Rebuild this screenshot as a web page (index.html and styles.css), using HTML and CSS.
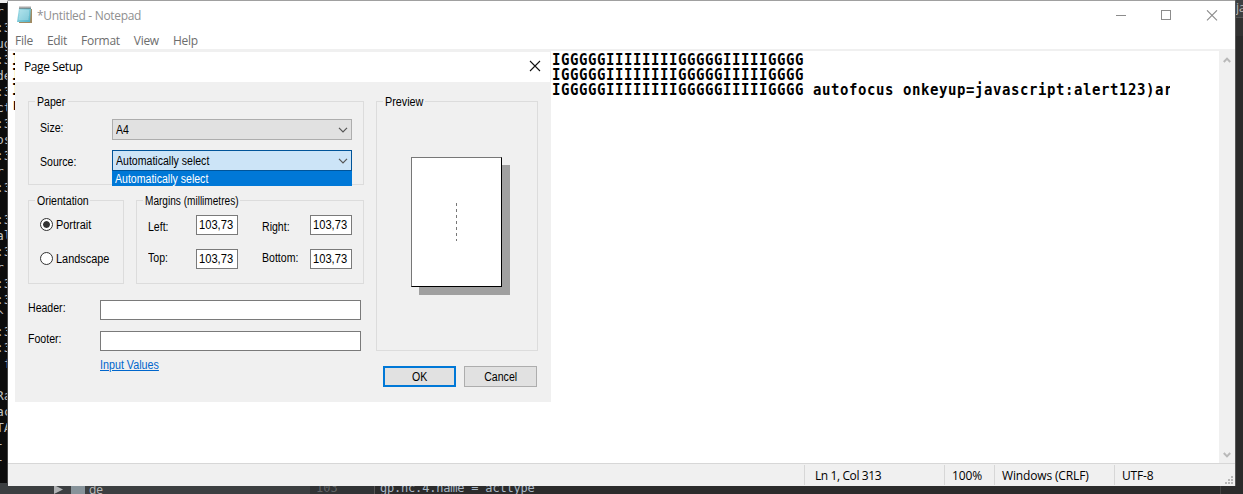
FILE: index.html
```html
<!DOCTYPE html>
<html lang="en">
<head>
<meta charset="utf-8">
<title>Notepad</title>
<link rel="stylesheet" href="styles.css">
</head>
<body>
<div class="desktop">
<div class="console"><pre>r .
:3
ug
:3
de
:3
ct
:3
os
:3
r |
:3

:3
al
:3
r |
:3
:3
^ |
:3
:3
 f

Ra
ac
TA
-
-</pre></div>
<div class="ide-right"><div class="ide-tab">ja</div><div class="ide-band"></div></div>
<div class="ide-bottom">
  <div class="tree"><svg width="9" height="10" viewBox="0 0 9 10"><path d="M0 0L9 4.5L0 9Z" fill="#afb1b3"/></svg><span class="folder"></span><span>de</span></div>
  <div class="gutter">103</div>
  <div class="code">gp.nc.4.name = acttype</div>
  <div class="ruler"></div>
</div>

<section class="notepad">
  <header class="titlebar">
    <svg class="logo" width="18" height="18" viewBox="0 0 18 18">
      <defs><linearGradient id="pad" x1="0" y1="0" x2="1" y2="1"><stop offset="0" stop-color="#a9e1ea"/><stop offset="1" stop-color="#4fb0c6"/></linearGradient></defs>
      <path d="M4 3H16V17H3Z" fill="#a08b63"/>
      <path d="M3 2H15L14 16H1Z" fill="url(#pad)"/>
      <path d="M4 5H13M3.5 7H13M3.3 9H13M3 11H12.7M2.7 13H12.5" stroke="#d3f1f6" stroke-width=".7"/>
      <path d="M4 .5V3M6 .5V3M8 .5V3M10 .5V3M12 .5V3M14 .5V3" stroke="#555" stroke-width="1"/>
    </svg>
    <span class="app-title ui">*Untitled - Notepad</span>
    <svg class="controls" width="104" height="12" viewBox="0 0 104 12" fill="none" stroke="#8c8c8c"><path d="M0 5.5H10"/><rect x="45.5" y=".5" width="9" height="9"/><path d="M91 .3L101 10.3M101 .3L91 10.3" stroke-width="1.1"/></svg>
  </header>
  <nav class="menu ui"><span>File</span><span>Edit</span><span>Format</span><span>View</span><span>Help</span></nav>
  <div class="editor">
<pre class="text">IGGGGGIIIIIIIIGGGGGIIIIIGGGGIIIIGGGGGIIIIIIIIGGGGGIIIIIGGGGIIGGGGGIIIIIIIIGGGGGIIIIIGGGG
IGGGGGIIIIIIIIGGGGGIIIIIGGGGIIIIGGGGGIIIIIIIIGGGGGIIIIIGGGGIIGGGGGIIIIIIIIGGGGGIIIIIGGGG
IGGGGGIIIIIIIIGGGGGIIIIIGGGGIIIIGGGGGIIIIIIIIGGGGGIIIIIGGGGIIGGGGGIIIIIIIIGGGGGIIIIIGGGG autofocus onkeyup=javascript:alert123)ar
r</pre>
    <div class="scrollbar">
      <svg width="8" height="6" viewBox="0 0 8 6"><path d="M.8 5L4 1.6L7.2 5" fill="none" stroke="#b9b9b9" stroke-width="2"/></svg>
      <svg width="8" height="6" viewBox="0 0 8 6"><path d="M.8 1L4 4.4L7.2 1" fill="none" stroke="#b9b9b9" stroke-width="2"/></svg>
    </div>
  </div>
  <footer class="status ui">
    <span class="s-fill"></span><span class="s-pos">Ln 1, Col 313</span><span class="s-zoom">100%</span><span class="s-eol">Windows (CRLF)</span><span class="s-enc">UTF-8</span>
    <svg class="grip" width="8" height="8" viewBox="0 0 8 8" fill="#b8b8b8"><path d="M6 0h2v2h-2zM3 3h2v2h-2zM6 3h2v2h-2zM0 6h2v2h-2zM3 6h2v2h-2zM6 6h2v2h-2z"/></svg>
  </footer>
</section>

<section class="dialog">
  <header class="dialog-title"><span class="ui">Page Setup</span>
    <svg width="12" height="12" viewBox="0 0 12 12"><path d="M1 1L11 11M11 1L1 11" stroke="#111" stroke-width="1.1"/></svg>
  </header>
  <div class="dialog-body">
    <div class="left">
      <div class="group paper">
        <div class="legend"><span class="t">Paper</span></div>
        <label class="t">Size:</label>
        <div class="combo"><span class="t">A4</span><svg width="10" height="6" viewBox="0 0 10 6"><path d="M1 .8L5 4.8L9 .8" fill="none" stroke="#555" stroke-width="1.2"/></svg></div>
        <label class="t low">Source:</label>
        <div class="combo open"><span class="t">Automatically select</span><svg width="10" height="6" viewBox="0 0 10 6"><path d="M1 .8L5 4.8L9 .8" fill="none" stroke="#555" stroke-width="1.2"/></svg>
          <div class="option"><span class="t">Automatically select</span></div></div>
      </div>
      <div class="pair">
        <div class="group orient">
          <div class="legend"><span class="t">Orientation</span></div>
          <div class="choice"><i class="radio on"></i><span class="t">Portrait</span></div>
          <div class="choice"><i class="radio"></i><span class="t">Landscape</span></div>
        </div>
        <div class="group margins">
          <div class="legend"><span class="t">Margins (millimetres)</span></div>
          <label class="t low">Left:</label><div class="num"><span class="t">103,73</span></div>
          <label class="t low">Right:</label><div class="num"><span class="t">103,73</span></div>
          <label class="t">Top:</label><div class="num"><span class="t">103,73</span></div>
          <label class="t">Bottom:</label><div class="num"><span class="t">103,73</span></div>
        </div>
      </div>
      <div class="fields">
        <label class="t">Header:</label><div class="input"></div>
        <label class="t">Footer:</label><div class="input"></div>
      </div>
      <a class="link t">Input Values</a>
    </div>
    <div class="right">
      <div class="group preview">
        <div class="legend"><span class="t">Preview</span></div>
        <div class="page"><svg width="1" height="38"><path d="M.5 0V38" stroke="#777" stroke-dasharray="3 3"/></svg></div>
      </div>
      <div class="buttons"><div class="button primary"><span class="t">OK</span></div><div class="button"><span class="t">Cancel</span></div></div>
    </div>
  </div>
</section>
</div>
</body>
</html>
```
FILE: styles.css
```css
* { box-sizing: border-box; }
body { margin: 0; }
svg { display: block; flex: none; }
.desktop { position: relative; width: 1243px; height: 494px; overflow: hidden; background: #2b2b2b; }
.ui { font-family: "Open Sans", "Noto Sans", sans-serif; font-size: 12px; line-height: 16px; white-space: nowrap; }
.t { font: 12px/14px "Liberation Sans", Arial, sans-serif; display: inline-block; transform: scaleX(.88); transform-origin: left center; white-space: nowrap; color: #000; }

.console { position: absolute; left: 0; top: 0; width: 8px; height: 483px; padding-top: 1px; border-top: 3px solid #eee; border-right: 1px solid #444; overflow: hidden; background: #0c0c0c; }
.console pre { margin: 0 0 0 -4px; color: #bdbdbd; font: 13px/16px "DejaVu Sans Mono", monospace; }
.ide-right { position: absolute; left: 1235px; top: 0; width: 8px; height: 486px; overflow: hidden; border-left: 1px solid #555; font: 12px/16px "Open Sans", sans-serif; color: #bbb; }
.ide-tab { height: 18px; background: #3c3f41; border-bottom: 1px solid #555; }
.ide-band { height: 18px; background: #323232; }
.ide-bottom { position: absolute; left: 0; top: 483px; width: 1243px; height: 11px; overflow: hidden; display: flex; color: #a9b7c6; }
.tree { width: 310px; height: 11px; padding-left: 54px; background: #3c3f41; display: flex; align-items: flex-start; font: 12px/14px "Open Sans", sans-serif; color: #bbb; }
.tree svg { margin-top: 2px; }
.folder { width: 14px; height: 8px; margin: 3px 4px 0 8px; background: #87939a; }
.gutter { width: 65px; padding-left: 6px; background: #313335; border-right: 1px solid #555; color: #606366; font: 12px/10px "DejaVu Sans Mono", monospace; }
.code { width: 845px; padding-left: 5px; font: 12px/10px "DejaVu Sans Mono", monospace; letter-spacing: -.2px; }
.ruler { width: 1px; background: #444; }

.notepad { position: absolute; left: 8px; top: 0; width: 1227px; height: 486px; background: #fff; border-top: 1px solid #a0a0a0; display: flex; flex-direction: column; }
.titlebar { height: 30px; display: flex; align-items: center; padding: 0 15px 0 8px; }
.logo { margin-top: -2px; }
.app-title { margin-left: 3px; color: #8f8f8f; letter-spacing: -.32px; }
.controls { margin-left: auto; }
.menu { height: 20px; border-bottom: 2px solid #f0f0f0; display: flex; gap: 14px; padding: 2px 7px 0; color: #6d6d6d; letter-spacing: -.28px; }
.editor { flex: 1; display: flex; justify-content: space-between; min-height: 0; }
.text { margin: 0; padding: 1px 0 0 4px; width: 1162px; height: 58px; overflow: hidden; font: bold 14px/14px "DejaVu Sans Mono", monospace; letter-spacing: .572px; color: #000; transform: scaleY(1.0714); transform-origin: left top; }
.scrollbar { width: 16px; background: #f0f0f0; display: flex; flex-direction: column; justify-content: space-between; align-items: center; padding: 6px 0 5px; }
.status { height: 23px; border-top: 1px solid #d7d7d7; background: #f0f0f0; display: flex; padding-top: 1px; color: #000; letter-spacing: -.15px; }
.status span { height: 20px; line-height: 21px; padding-left: 7px; border-left: 1px solid #d7d7d7; }
.status .s-fill { width: 796px; border: 0; }
.status .s-pos { width: 140px; padding-left: 10px; letter-spacing: -.4px; }
.s-zoom { width: 50px; }
.s-eol { width: 120px; }
.s-enc { width: 111px; }
.grip { margin: 11px 0 0; }

.dialog { position: absolute; left: 15px; top: 51px; width: 536px; height: 351px; background: #f0f0f0; }
.dialog-title { height: 31px; margin-right: 1px; border-top: 1px solid #f0f0f0; background: #fff; display: flex; justify-content: space-between; align-items: center; padding: 0 9px; color: #000; letter-spacing: -.4px; }
.dialog-title svg { margin-top: -2px; }
.dialog-body { display: flex; gap: 12px; padding: 19px 13px 0; }
.left { width: 336px; }
.right { width: 162px; }
.group { position: relative; border: 1px solid #dcdcdc; }
.legend { position: absolute; left: 6px; top: -7px; height: 14px; padding-left: 2px; background: #f0f0f0; display: flex; }
.paper .legend { width: 33px; }
.orient .legend { width: 55px; }
.margins .legend { width: 97px; }
.margins .legend .t { transform: scaleX(.84); }
.preview .legend { width: 42px; }
.preview .legend .t { transform: scaleX(.9); }
.paper { height: 84px; padding: 17px 11px; display: grid; grid-template-columns: 72px 240px; grid-template-rows: 21px 21px; row-gap: 10px; }
.paper label { margin-top: 2px; }
.paper label.low { margin-top: 5px; }
.combo { position: relative; height: 21px; border: 1px solid #adadad; background: #e1e1e1; display: flex; justify-content: space-between; align-items: center; padding: 0 3px 0 2.5px; }
.combo.open { background: #cce4f7; border-color: #005499; }
.option { position: absolute; left: -1px; right: -1px; top: 20px; height: 15px; background: #0078d7; padding: 1px 0 0 3px; display: flex; }
.option .t { color: #fff; }
.pair { display: flex; gap: 12px; margin-top: 15px; }
.orient { width: 96px; height: 84px; padding: 16px 11px; }
.choice { display: flex; align-items: center; gap: 3px; height: 14px; margin-bottom: 20px; }
.choice .t { margin-top: 2px; transform: scaleX(.91); }
.radio { width: 13px; height: 13px; flex: none; border: 1px solid #333; border-radius: 50%; background: #fff; padding: 2px; display: block; }
.radio.on { background: #333; background-clip: content-box; box-shadow: inset 0 0 0 2px #fff; }
.margins { width: 228px; height: 84px; padding: 14px 11px; display: grid; grid-template-columns: 48px 66px 48px 42px; grid-template-rows: 20px 20px; row-gap: 14px; justify-content: start; }
.margins label { margin-top: 2px; }
.margins label.low { margin-top: 5px; }
.num { width: 42px; height: 20px; border: 1px solid #7a7a7a; background: #fff; padding: 2px 0 0 2px; display: flex; }
.num .t { transform: scaleX(.93); }
.fields { margin-top: 16px; display: grid; grid-template-columns: 72px 261px; grid-auto-rows: 20px; row-gap: 11px; }
.fields label { margin-top: 1px; }
.input { border: 1px solid #7a7a7a; background: #fff; }
.link { margin: 7px 0 0 72px; color: #0066cc; text-decoration: underline; transform: scaleX(.895); }
.preview { height: 250px; padding: 55px 0 0 34px; }
.page { width: 91px; height: 130px; background: #fff; border: 1px solid #777; border-right-color: #000; border-bottom-color: #000; box-shadow: 8px 8px 0 #a0a0a0; padding: 45px 0 0 44px; }
.buttons { display: flex; gap: 8px; padding: 15px 0 0 7px; }
.button { width: 73px; height: 21px; border: 1px solid #adadad; background: #e1e1e1; display: flex; align-items: center; justify-content: center; }
.button .t { transform-origin: center; }
.button.primary { border: 2px solid #0078d7; }
```
